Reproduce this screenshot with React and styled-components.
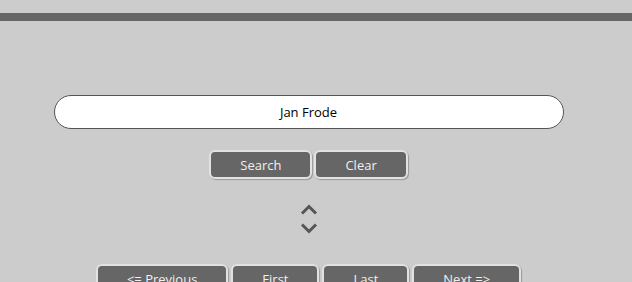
import React, { useState } from 'react';
import styled, { createGlobalStyle } from 'styled-components';

const GlobalStyle = createGlobalStyle`
  html, body {
    margin: 0;
    padding: 0;
    overflow: hidden;
    background: #cccccc;
    font-family: 'Open Sans', 'Noto Sans', sans-serif;
  }
`;

const App = () => {
  const [name, setName] = useState('Jan Frode');
  return (
    <Page>
      <GlobalStyle />
      <TopBar />
      <Main>
        <SearchInput value={name} onChange={(e) => setName(e.target.value)} />
        <ButtonRow>
          <Button>Search</Button>
          <Button onClick={() => setName('')}>Clear</Button>
        </ButtonRow>
        <SortToggle aria-label="sort">
          <svg width="18" height="32" viewBox="0 0 18 32">
            <polyline points="2,10.5 9,3.5 16,10.5" fill="none" stroke="#555" strokeWidth="3" />
            <polyline points="2,21.5 9,28.5 16,21.5" fill="none" stroke="#555" strokeWidth="3" />
          </svg>
        </SortToggle>
        <PagerRow>
          <Button>&lt;= Previous</Button>
          <Button>First</Button>
          <Button>Last</Button>
          <Button>Next =&gt;</Button>
        </PagerRow>
      </Main>
    </Page>
  );
};

export default App;

const Page = styled.div`
  padding-top: 13px;
`;

const TopBar = styled.div`
  height: 8px;
  background: #666666;
`;

const Main = styled.main`
  display: flex;
  flex-direction: column;
  align-items: center;
  padding: 74px 15px 0 0;
`;

const SearchInput = styled.input`
  box-sizing: border-box;
  width: 510px;
  height: 34px;
  border: 1px solid #555;
  border-radius: 17px;
  background: #fff;
  text-align: center;
  font-family: inherit;
  font-size: 13px;
  color: #000;
  outline: none;
`;

const ButtonRow = styled.div`
  display: flex;
  gap: 2px;
  margin-top: 21px;
`;

const PagerRow = styled(ButtonRow)`
  gap: 3px;
  margin-top: 29px;
`;

const Button = styled.button`
  box-sizing: border-box;
  height: 29px;
  padding: 0 29px;
  background: #666666;
  color: #f0f0f0;
  border: 2px solid #e2e2e2;
  border-radius: 6px;
  box-shadow: 1px 1px 1px rgba(0, 0, 0, 0.25);
  font-family: inherit;
  font-size: 13px;
  cursor: pointer;
`;

const SortToggle = styled.div`
  display: flex;
  margin-top: 24px;
  cursor: pointer;
`;
